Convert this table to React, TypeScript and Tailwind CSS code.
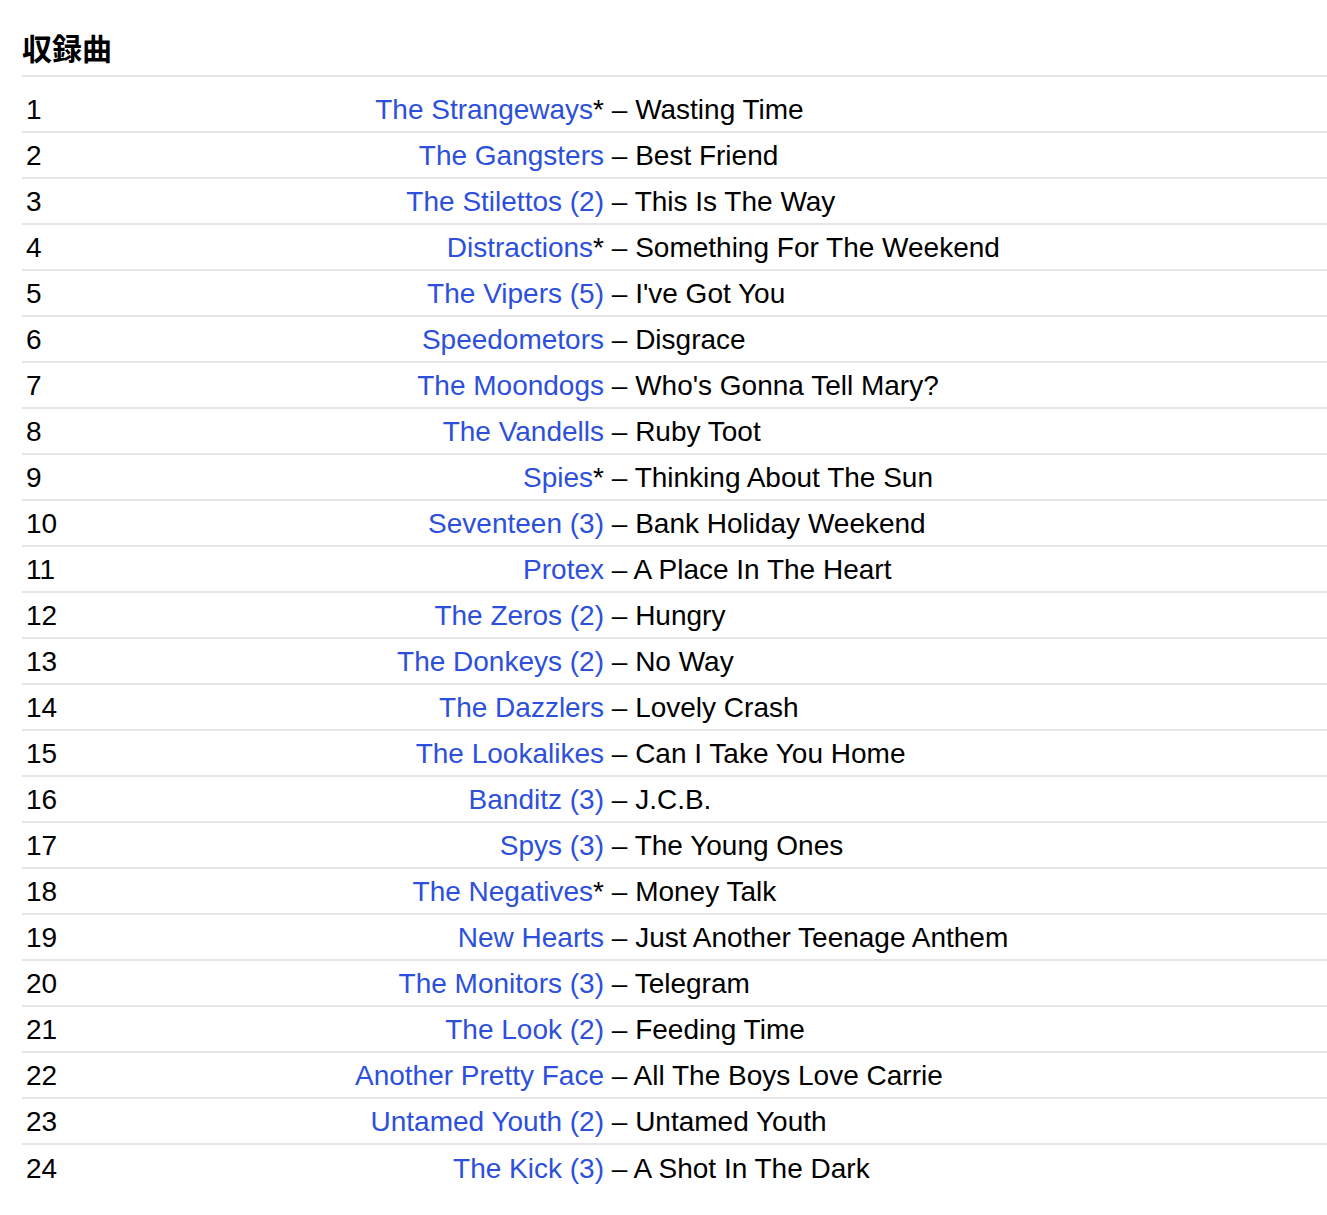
import React from 'react';

interface Track {
    pos: number;
    artist: string;
    star?: boolean;
    num?: number;
    title: string;
}

const tracks: Track[] = [
    { pos: 1, artist: 'The Strangeways', star: true, title: 'Wasting Time' },
    { pos: 2, artist: 'The Gangsters', title: 'Best Friend' },
    { pos: 3, artist: 'The Stilettos', num: 2, title: 'This Is The Way' },
    { pos: 4, artist: 'Distractions', star: true, title: 'Something For The Weekend' },
    { pos: 5, artist: 'The Vipers', num: 5, title: "I've Got You" },
    { pos: 6, artist: 'Speedometors', title: 'Disgrace' },
    { pos: 7, artist: 'The Moondogs', title: "Who's Gonna Tell Mary?" },
    { pos: 8, artist: 'The Vandells', title: 'Ruby Toot' },
    { pos: 9, artist: 'Spies', star: true, title: 'Thinking About The Sun' },
    { pos: 10, artist: 'Seventeen', num: 3, title: 'Bank Holiday Weekend' },
    { pos: 11, artist: 'Protex', title: 'A Place In The Heart' },
    { pos: 12, artist: 'The Zeros', num: 2, title: 'Hungry' },
    { pos: 13, artist: 'The Donkeys', num: 2, title: 'No Way' },
    { pos: 14, artist: 'The Dazzlers', title: 'Lovely Crash' },
    { pos: 15, artist: 'The Lookalikes', title: 'Can I Take You Home' },
    { pos: 16, artist: 'Banditz', num: 3, title: 'J.C.B.' },
    { pos: 17, artist: 'Spys', num: 3, title: 'The Young Ones' },
    { pos: 18, artist: 'The Negatives', star: true, title: 'Money Talk' },
    { pos: 19, artist: 'New Hearts', title: 'Just Another Teenage Anthem' },
    { pos: 20, artist: 'The Monitors', num: 3, title: 'Telegram' },
    { pos: 21, artist: 'The Look', num: 2, title: 'Feeding Time' },
    { pos: 22, artist: 'Another Pretty Face', title: 'All The Boys Love Carrie' },
    { pos: 23, artist: 'Untamed Youth', num: 2, title: 'Untamed Youth' },
    { pos: 24, artist: 'The Kick', num: 3, title: 'A Shot In The Dark' },
];

const App = () => {
    return (
        <div className="min-h-[1215px] bg-white pl-[22px] text-black" style={{ fontFamily: '"Liberation Sans", Arial, sans-serif' }}>
            <h2
                className="pt-[32px] pb-[13px] h-[77px] text-[30px] leading-[30px] font-bold border-b-2 border-[#e5e5e5]"
                style={{ fontFamily: '"Noto Sans CJK JP", sans-serif' }}
            >
                収録曲
            </h2>

            <div className="mt-[10px]">
                {tracks.map((t, i) => (
                    <div
                        key={t.pos}
                        className={`grid grid-cols-[120px_462px_1fr] items-center h-[46px] pt-[2px] text-[28px] leading-[32px] ${i < tracks.length - 1 ? 'border-b-2 border-[#e5e5e5]' : ''}`}
                    >
                        <span className="pl-[4px]">{t.pos}</span>
                        <span className="text-right whitespace-nowrap">
                            <a className="text-[#2d50dc]">
                                {t.artist}
                                {t.num ? ` (${t.num})` : ''}
                            </a>
                            {t.star && '*'}
                        </span>
                        <span className="whitespace-pre">{` – ${t.title}`}</span>
                    </div>
                ))}
            </div>
        </div>
    );
};

export default App;
